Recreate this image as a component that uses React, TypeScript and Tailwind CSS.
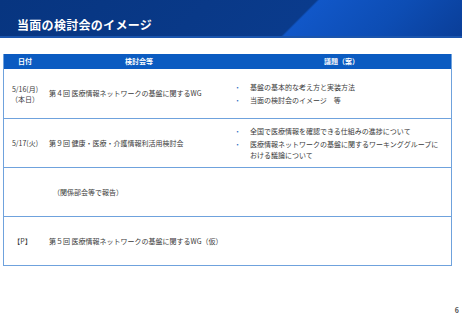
import React from "react";

const font = { fontFamily: '"Noto Sans CJK JP", "Noto Sans", sans-serif' };

function Bullets({ items }: { items: string[][] }) {
  return (
    <div className="flex flex-col gap-[2px]">
      {items.map((lines, i) => (
        <div key={i} className="flex">
          <span className="w-[16px] shrink-0 text-[#2f6fc4]">・</span>
          <div className="flex flex-col">
            {lines.map((l, j) => (
              <span key={j}>{l}</span>
            ))}
          </div>
        </div>
      ))}
    </div>
  );
}

export default function App() {
  const rows = [
    {
      date: (
        <div className="flex flex-col items-center leading-[10px]">
          <span>5/16(月)</span>
          <span>（本日）</span>
        </div>
      ),
      name: <span className="pl-[3px]">第４回 医療情報ネットワークの基盤に関するWG</span>,
      agenda: <Bullets items={[["基盤の基本的な考え方と実装方法"], ["当面の検討会のイメージ　等"]]} />,
    },
    {
      date: <span>5/17(火)</span>,
      name: <span className="pl-[3px]">第９回 健康・医療・介護情報利活用検討会</span>,
      agenda: (
        <Bullets
          items={[
            ["全国で医療情報を確認できる仕組みの進捗について"],
            ["医療情報ネットワークの基盤に関するワーキンググループに", "おける議論について"],
          ]}
        />
      ),
    },
    {
      date: <span></span>,
      name: <span className="pl-[7px]">（関係部会等で報告）</span>,
      agenda: <span></span>,
    },
    {
      date: <span className="pr-[5px]">【P】</span>,
      name: <span className="pl-[3px]">第５回 医療情報ネットワークの基盤に関するWG（仮）</span>,
      agenda: <span></span>,
    },
  ];

  return (
    <div className="w-[462px] h-[320px] bg-white flex flex-col overflow-hidden" style={font}>
      <div className="h-[38px] shrink-0 border-b-2 border-[#1b55ad] bg-[linear-gradient(135deg,#073580_0px,#0a3b8c_224px,#1157c8_226px,#0d4db4_290px,#0a3e98_353px)] pl-[17px] pt-[17px]">
        <div className="text-[12px] leading-[16px] font-bold text-white tracking-[0.3px]">当面の検討会のイメージ</div>
      </div>

      <div className="ml-[3px] mt-[16px] w-[449px] border-x border-b border-[#6fa2dd] text-[7px] text-[#3a3a3a]">
        <div className="grid grid-cols-[42px_186px_219px] h-[15px] bg-[#0b5bc1] text-white font-bold items-center leading-[15px]">
          <div className="text-center">日付</div>
          <div className="text-center">検討会等</div>
          <div className="text-center">議題（案）</div>
        </div>
        {rows.map((r, i) => (
          <div
            key={i}
            className={`grid grid-cols-[42px_186px_219px] h-[49px] items-center leading-[11px] ${i > 0 ? "border-t border-[#6fa2dd]" : ""}`}
          >
            <div className="flex justify-center">{r.date}</div>
            <div className="flex">{r.name}</div>
            <div className="pl-[2px]">{r.agenda}</div>
          </div>
        ))}
      </div>

      <div className="flex justify-end pr-[3px] mt-[40px] text-[7px] leading-[8px] font-bold text-[#555]">6</div>
    </div>
  );
}
